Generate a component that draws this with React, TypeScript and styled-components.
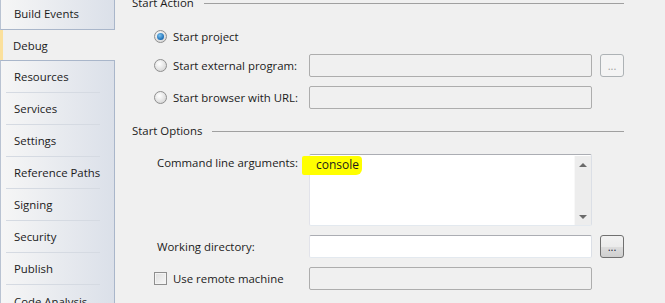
import styled, { createGlobalStyle } from "styled-components";

const GlobalStyle = createGlobalStyle`
  html, body {
    margin: 0;
    padding: 0;
    background: #f0f0f0;
  }
  * {
    box-sizing: border-box;
  }
`;

const Page = styled.div`
  display: flex;
  width: 665px;
  height: 303px;
  overflow: hidden;
  background: #f0f0f0;
  font-family: "Segoe UI", "Open Sans", "Noto Sans", sans-serif;
  font-size: 11.4px;
  color: #1b1b1b;
`;

const Sidebar = styled.nav`
  width: 115px;
  flex-shrink: 0;
  display: flex;
  flex-direction: column;
`;

const TabGroup = styled.div<{ $top?: number }>`
  margin-top: ${(p) => p.$top ?? 0}px;
  flex-shrink: 0;
  display: flex;
  flex-direction: column;
  padding: 0 14px 0 5px;
  border: 1px solid #a9b6ca;
  border-left-color: #b9c3d2;
  background: linear-gradient(to right, #f6f6f6, #dbe0e9);
`;

const Tab = styled.div<{ $h: number }>`
  height: ${(p) => p.$h}px;
  flex-shrink: 0;
  display: flex;
  align-items: center;
  padding-left: 8px;
  white-space: nowrap;
  border-bottom: 1px solid #d5dae2;

  &:last-child {
    border-bottom: none;
  }
`;

const ActiveTab = styled.div`
  height: 30px;
  flex-shrink: 0;
  display: flex;
  align-items: center;
  padding-left: 10px;
  border-left: 3px solid #fbe09c;
`;

const Main = styled.main`
  flex: 1;
  padding: 0 41px 0 17px;
  display: flex;
  flex-direction: column;
`;

const SectionHeader = styled.div<{ $top: number }>`
  margin-top: ${(p) => p.$top}px;
  height: 16px;
  flex-shrink: 0;
  line-height: 16px;
  display: flex;
  align-items: center;
  gap: 10px;
  white-space: nowrap;

  &::after {
    content: "";
    flex: 1;
    height: 1px;
    background: #a0a0a0;
  }
`;

const Row = styled.div<{ $top: number; $align?: string }>`
  margin-top: ${(p) => p.$top}px;
  min-height: 23px;
  flex-shrink: 0;
  display: flex;
  align-items: ${(p) => p.$align ?? "center"};
  padding-left: 22px;
`;

const LabelCell = styled.label<{ $indent?: number; $pt?: number }>`
  width: 155px;
  flex-shrink: 0;
  display: flex;
  align-items: center;
  gap: 6px;
  padding-left: ${(p) => p.$indent ?? 0}px;
  padding-top: ${(p) => p.$pt ?? 0}px;
  line-height: 16px;
  white-space: nowrap;
`;

const Radio = styled.span<{ $checked?: boolean }>`
  width: 13px;
  height: 13px;
  border-radius: 50%;
  border: 1px solid #8f8f8f;
  background: radial-gradient(circle at 40% 35%, #ffffff, #dcdcdc 70%, #cfcfcf);
  display: flex;
  align-items: center;
  justify-content: center;
  flex-shrink: 0;

  &::after {
    content: "";
    display: ${(p) => (p.$checked ? "block" : "none")};
    width: 7px;
    height: 7px;
    border-radius: 50%;
    background: radial-gradient(circle at 40% 35%, #7cc3f0, #1b6cb4 70%, #0f4f8a);
  }
`;

const Checkbox = styled.span`
  width: 13px;
  height: 13px;
  border: 1px solid #8f8f8f;
  background: linear-gradient(135deg, #dedede, #f8f8f8);
  box-shadow: inset 0 0 0 1px #f4f4f4;
  flex-shrink: 0;
`;

const Field = styled.div<{ $disabled?: boolean; $h?: number }>`
  position: relative;
  width: 283px;
  flex-shrink: 0;
  height: ${(p) => p.$h ?? 23}px;
  border-radius: 2px;
  border: 1px solid;
  border-color: ${(p) =>
    p.$disabled ? "#adadad" : "#abadb3 #dbdfe6 #e3e9ef #e2e3ea"};
  background: ${(p) => (p.$disabled ? "#f0f0f0" : "#ffffff")};
`;

const FieldText = styled.div`
  position: relative;
  z-index: 1;
  padding: 2px 0 0 6px;
  line-height: 16px;
  font-size: 12px;
`;

const Marker = styled.span`
  position: absolute;
  left: -8px;
  top: 1px;
  width: 60px;
  height: 19px;
  background: #ffff00;
  border-radius: 2px 4px 6px 2px;
`;

const ScrollBar = styled.div`
  position: absolute;
  right: 0;
  top: 1px;
  bottom: 0;
  width: 17px;
  background: #ededed;
  border-left: 1px solid #f8f8f8;
  display: flex;
  flex-direction: column;
  justify-content: space-between;
  align-items: center;
  padding: 7px 0 6px;
`;

const Arrow = styled.span<{ $down?: boolean }>`
  width: 0;
  height: 0;
  border-left: 4px solid transparent;
  border-right: 4px solid transparent;
  ${(p) =>
    p.$down
      ? "border-top: 4px solid #6a6a6a;"
      : "border-bottom: 4px solid #6a6a6a;"}
`;

const BrowseButton = styled.button<{ $disabled?: boolean }>`
  margin-left: 8px;
  width: 24px;
  height: 23px;
  flex-shrink: 0;
  padding: 0 0 5px;
  border-radius: 3px;
  font-family: inherit;
  font-size: 11px;
  line-height: 1;
  display: flex;
  align-items: flex-end;
  justify-content: center;
  border: 1px solid ${(p) => (p.$disabled ? "#adb2b5" : "#707070")};
  color: ${(p) => (p.$disabled ? "#a0a0a0" : "#1b1b3b")};
  background: ${(p) =>
    p.$disabled
      ? "#f4f4f4"
      : "linear-gradient(to bottom, #f2f2f2 0%, #ebebeb 50%, #dddddd 51%, #cfcfcf 100%)"};
`;

export default function App() {
  const lowerTabs = [
    "Resources",
    "Services",
    "Settings",
    "Reference Paths",
    "Signing",
    "Security",
    "Publish",
    "Code Analysis",
  ];

  return (
    <>
      <GlobalStyle />
      <Page>
        <Sidebar>
          <TabGroup $top={-4}>
            <Tab $h={32}>Build Events</Tab>
          </TabGroup>
          <ActiveTab>Debug</ActiveTab>
          <TabGroup>
            {lowerTabs.map((t) => (
              <Tab key={t} $h={32}>
                {t}
              </Tab>
            ))}
          </TabGroup>
        </Sidebar>

        <Main>
          <SectionHeader $top={-5}>Start Action</SectionHeader>
          <Row $top={14}>
            <LabelCell>
              <Radio $checked />
              Start project
            </LabelCell>
          </Row>
          <Row $top={6}>
            <LabelCell>
              <Radio />
              Start external program:
            </LabelCell>
            <Field $disabled />
            <BrowseButton $disabled>...</BrowseButton>
          </Row>
          <Row $top={9}>
            <LabelCell>
              <Radio />
              Start browser with URL:
            </LabelCell>
            <Field $disabled />
          </Row>

          <SectionHeader $top={14}>Start Options</SectionHeader>
          <Row $top={15} $align="flex-start">
            <LabelCell $indent={3} $pt={1}>
              Command line arguments:
            </LabelCell>
            <Field $h={72}>
              <Marker />
              <FieldText>console</FieldText>
              <ScrollBar>
                <Arrow />
                <Arrow $down />
              </ScrollBar>
            </Field>
          </Row>
          <Row $top={9}>
            <LabelCell $indent={3}>Working directory:</LabelCell>
            <Field />
            <BrowseButton>...</BrowseButton>
          </Row>
          <Row $top={9}>
            <LabelCell>
              <Checkbox />
              Use remote machine
            </LabelCell>
            <Field $disabled />
          </Row>
        </Main>
      </Page>
    </>
  );
}
